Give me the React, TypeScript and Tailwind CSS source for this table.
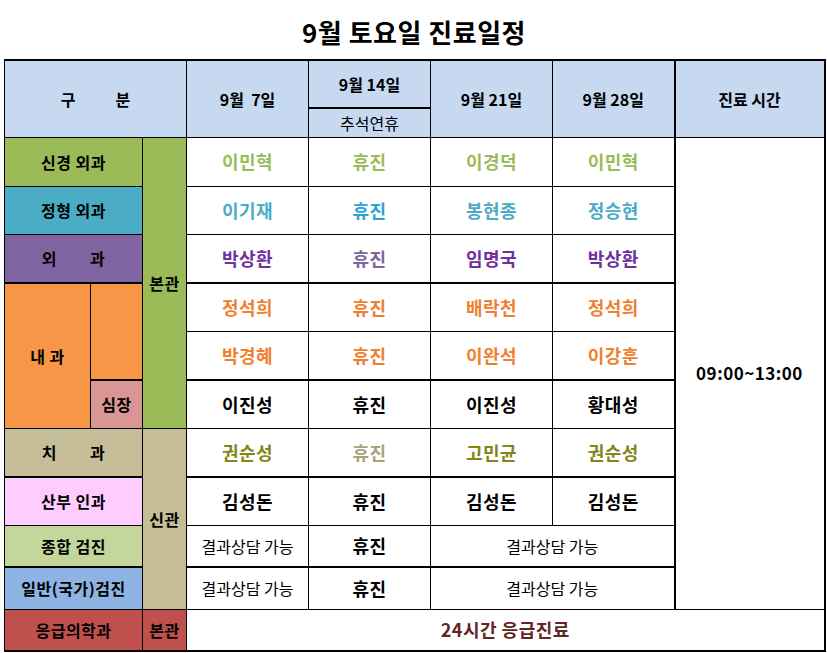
const FONT = { fontFamily: '"Noto Sans CJK KR", "Malgun Gothic", sans-serif' };

const cell = "border border-black text-center align-middle p-0";
const head = `${cell} bg-[#c6d9f1] text-[16px] font-bold`;
const dept = `${cell} text-[16px] font-bold text-black tracking-[0.5px]`;
const name = `${cell} text-[18px] font-bold tracking-[0.5px]`;

type Row = { names: [string, string][]; thick?: boolean };

// 4 date columns per row: [text, color]
const G = "#9bbb59";
const C = "#4bacc6";
const P = "#7030a0";
const O = "#f0802f";
const K = "#000000";
const Y = "#85851a";

export default function App() {
  const rows: Record<string, Row> = {
    sin: { names: [["이민혁", G], ["휴진", G], ["이경덕", G], ["이민혁", G]] },
    jeong: { names: [["이기재", C], ["휴진", "#2aa3d6"], ["봉현종", C], ["정승현", C]] },
    oe: { names: [["박상환", P], ["휴진", "#8064a2"], ["임명국", P], ["박상환", P]] },
    nae1: { names: [["정석희", O], ["휴진", O], ["배락천", O], ["정석희", O]], thick: true },
    nae2: { names: [["박경혜", O], ["휴진", O], ["이완석", O], ["이강훈", O]] },
    sim: { names: [["이진성", K], ["휴진", K], ["이진성", K], ["황대성", K]], thick: true },
    chi: { names: [["권순성", Y], ["휴진", "#aaa27c"], ["고민균", Y], ["권순성", Y]] },
    san: { names: [["김성돈", K], ["휴진", K], ["김성돈", K], ["김성돈", K]], thick: true },
  };

  const names = (r: Row) =>
    r.names.map(([t, c], i) => (
      <td key={i} className={`${name} ${r.thick ? "border-t-2" : ""}`} style={{ color: c }}>
        {t}
      </td>
    ));

  return (
    <div className="bg-white w-[827px] h-[653px] pl-[4px]" style={FONT}>
      <div className="w-[820px] h-[59px] pt-[3px] flex items-center justify-center text-[26px] font-bold tracking-[0.5px] text-black">
        9월 토요일 진료일정
      </div>
      <table className="table-fixed border-collapse w-[820px] border-t-2 border-r-2 border-b-2 border-black">
        <colgroup>
          <col className="w-[86px]" />
          <col className="w-[52px]" />
          <col className="w-[44px]" />
          <col className="w-[122px]" />
          <col className="w-[122px]" />
          <col className="w-[122px]" />
          <col className="w-[122px]" />
          <col className="w-[150px]" />
        </colgroup>
        <tbody>
          <tr className="h-[48px]">
            <th colSpan={3} rowSpan={2} className={`${head} whitespace-pre`}>
              {"구           분"}
            </th>
            <th rowSpan={2} className={`${head} whitespace-pre`}>
              {"9월  7일"}
            </th>
            <th className={`${head} border-b-2`}>9월 14일</th>
            <th rowSpan={2} className={head}>9월 21일</th>
            <th rowSpan={2} className={head}>9월 28일</th>
            <th rowSpan={2} className={`${head} border-l-2`}>진료 시간</th>
          </tr>
          <tr className="h-[29px]">
            <th className={`${head} font-normal`}>추석연휴</th>
          </tr>

          <tr className="h-[49px]">
            <td colSpan={2} className={`${dept} bg-[#9bbb59]`}>신경 외과</td>
            <td rowSpan={6} className={`${dept} bg-[#9bbb59]`}>본관</td>
            {names(rows.sin)}
            <td rowSpan={10} className={`${cell} border-l-2 text-[17px] font-bold tracking-[0.5px]`}>
              09:00~13:00
            </td>
          </tr>
          <tr className="h-[48px]">
            <td colSpan={2} className={`${dept} bg-[#4bacc6]`}>정형 외과</td>
            {names(rows.jeong)}
          </tr>
          <tr className="h-[49px]">
            <td colSpan={2} className={`${dept} bg-[#8064a2] whitespace-pre`}>
              {"외        과"}
            </td>
            {names(rows.oe)}
          </tr>
          <tr className="h-[48px]">
            <td rowSpan={3} className={`${dept} bg-[#f79646] border-t-2`}>내 과</td>
            <td rowSpan={2} className={`${dept} bg-[#f79646] border-t-2`}></td>
            {names(rows.nae1)}
          </tr>
          <tr className="h-[49px]">{names(rows.nae2)}</tr>
          <tr className="h-[48px]">
            <td className={`${dept} bg-[#da9694] border-t-2`}>심장</td>
            {names(rows.sim)}
          </tr>

          <tr className="h-[49px]">
            <td colSpan={2} className={`${dept} bg-[#c4bd97] whitespace-pre`}>
              {"치        과"}
            </td>
            <td rowSpan={4} className={`${dept} bg-[#c4bd97]`}>신관</td>
            {names(rows.chi)}
          </tr>
          <tr className="h-[48px]">
            <td colSpan={2} className={`${dept} bg-[#ffccff] border-t-2`}>산부 인과</td>
            {names(rows.san)}
          </tr>
          <tr className="h-[42px]">
            <td colSpan={2} className={`${dept} bg-[#c3d69b]`}>종합 검진</td>
            <td className={`${cell} text-[16px]`}>결과상담 가능</td>
            <td className={name}>휴진</td>
            <td colSpan={2} className={`${cell} text-[16px]`}>결과상담 가능</td>
          </tr>
          <tr className="h-[42px]">
            <td colSpan={2} className={`${dept} bg-[#8db4e2] border-t-2`}>일반(국가)검진</td>
            <td className={`${cell} text-[16px] border-t-2`}>결과상담 가능</td>
            <td className={`${name} border-t-2`}>휴진</td>
            <td colSpan={2} className={`${cell} text-[16px] border-t-2`}>결과상담 가능</td>
          </tr>
          <tr className="h-[42px]">
            <td colSpan={2} className={`${dept} bg-[#c0504d]`}>응급의학과</td>
            <td className={`${dept} bg-[#c0504d]`}>본관</td>
            <td colSpan={5} className={`${cell} text-[18px] font-bold tracking-[0.5px] text-[#632523]`}>
              24시간 응급진료
            </td>
          </tr>
        </tbody>
      </table>
    </div>
  );
}
